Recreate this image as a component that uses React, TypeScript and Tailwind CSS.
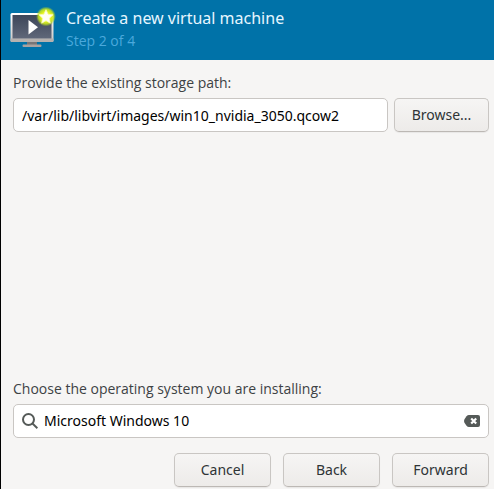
import { useState } from "react";
import type { ReactNode } from "react";

function MonitorIcon() {
  return (
    <svg viewBox="0 0 48 48" className="h-12 w-12 shrink-0" aria-hidden="true">
      <defs>
        <linearGradient id="screen" x1="0" y1="0" x2="0" y2="1">
          <stop offset="0" stopColor="#3d4659" />
          <stop offset="1" stopColor="#5f6779" />
        </linearGradient>
        <linearGradient id="frame" x1="0" y1="0" x2="0" y2="1">
          <stop offset="0" stopColor="#ffffff" />
          <stop offset="1" stopColor="#c9c5c3" />
        </linearGradient>
        <radialGradient id="glow">
          <stop offset="0.5" stopColor="#e2f41c" />
          <stop offset="0.75" stopColor="#c8e61c" stopOpacity="0.85" />
          <stop offset="1" stopColor="#a5d030" stopOpacity="0" />
        </radialGradient>
      </defs>
      <path d="M19 35h10v5H19z" fill="#777577" />
      <path d="M15.500 38.500h17q1 0 1 1.200t-1 1.300h-17q-1 0-1-1.300t1-1.200z" fill="#aaa29f" />
      <rect x="2.500" y="7" width="43" height="29" rx="1.500" fill="url(#frame)" />
      <path d="M2.500 32.500h43V34.500q0 1.500-1.500 1.500H4Q2.500 36 2.500 34.500z" fill="#b5b1af" />
      <rect x="4.500" y="9" width="39" height="23.500" fill="url(#screen)" />
      <path d="M20.500 14v14.500L30 21.200z" fill="#fff" />
      <circle cx="38" cy="10.500" r="10" fill="url(#glow)" />
      <path d="M38 3.700l2.100 4.500 4.900.6-3.600 3.400.9 5-4.300-2.500-4.300 2.500.9-5-3.600-3.400 4.900-.6z" fill="#fffff4" stroke="#fbfdb0" strokeWidth="0.800" />
    </svg>
  );
}

function SearchIcon() {
  return (
    <svg viewBox="0 0 16 16" className="h-4 w-4 shrink-0" fill="none" stroke="#555a58" strokeWidth="2" aria-hidden="true">
      <circle cx="6.500" cy="6.500" r="5.500" />
      <path d="M10.500 10.500l4.900 4.700" />
    </svg>
  );
}

function ClearIcon() {
  return (
    <svg viewBox="0 0 16 12" className="h-3 w-4" aria-hidden="true">
      <path d="M5 0h9q2 0 2 2v8q0 2-2 2H5Q3.500 12 2.500 10.700L.6 8Q-.5 6 .6 4L2.500 1.300Q3.500 0 5 0z" fill="#555a58" />
      <path d="M7.200 3.500l5 5M12.200 3.500l-5 5" stroke="#fff" strokeWidth="2.200" />
    </svg>
  );
}

function Button({ children, className }: { children: ReactNode; className: string }) {
  return (
    <button
      type="button"
      className={`h-[34px] shrink-0 rounded-[5px] border border-[#c9c6c3] border-b-[#bcb8b4] bg-linear-to-b from-[#f6f5f4] to-[#edebe9] text-[#2e3436] shadow-[0_1px_1px_rgba(0,0,0,0.06)] ${className}`}
    >
      {children}
    </button>
  );
}

export default function App() {
  const [path, setPath] = useState("/var/lib/libvirt/images/win10_nvidia_3050.qcow2");
  const [system, setSystem] = useState("Microsoft Windows 10");

  return (
    <div className="flex min-h-screen flex-col border-l border-black bg-[#f6f5f4] font-['Noto_Sans',sans-serif] text-sm leading-5 text-[#3d4244]">
      <header className="flex h-[60px] items-center gap-[10px] bg-[#0072a8] pl-[7px]">
        <MonitorIcon />
        <div className="pb-[3px]">
          <h1 className="text-base leading-6 text-[#e6f6ff]">Create a new virtual machine</h1>
          <p className="mt-px font-['Open_Sans',sans-serif] text-[#4ba9dc]">Step 2 of 4</p>
        </div>
      </header>

      <main className="flex grow flex-col pt-[13px] pr-[5px] pb-[2px] pl-3">
        <label htmlFor="storage" className="font-['Open_Sans',sans-serif]">Provide the existing storage path:</label>
        <div className="mt-[5px] flex gap-[6px]">
          <input
            id="storage"
            type="text"
            value={path}
            onChange={(event) => setPath(event.target.value)}
            className="h-[34px] min-w-0 grow rounded-[5px] border border-[#c9c6c3] bg-white px-2 text-black outline-none"
          />
          <Button className="w-[95px]">Browse...</Button>
        </div>

        <label htmlFor="system" className="mt-auto font-['Open_Sans',sans-serif]">Choose the operating system you are installing:</label>
        <div className="mt-[5px] flex h-[34px] items-center gap-[6px] rounded-[5px] border border-[#c9c6c3] bg-white px-2">
          <SearchIcon />
          <input
            id="system"
            type="text"
            value={system}
            onChange={(event) => setSystem(event.target.value)}
            className="min-w-0 grow bg-transparent text-black outline-none"
          />
          <button type="button" aria-label="Clear" onClick={() => setSystem("")}>
            <ClearIcon />
          </button>
        </div>

        <div className="mt-[15px] flex justify-end gap-3">
          <Button className="w-[97px]">Cancel</Button>
          <Button className="w-[97px]">Back</Button>
          <Button className="w-[97px]">Forward</Button>
        </div>
      </main>
    </div>
  );
}
